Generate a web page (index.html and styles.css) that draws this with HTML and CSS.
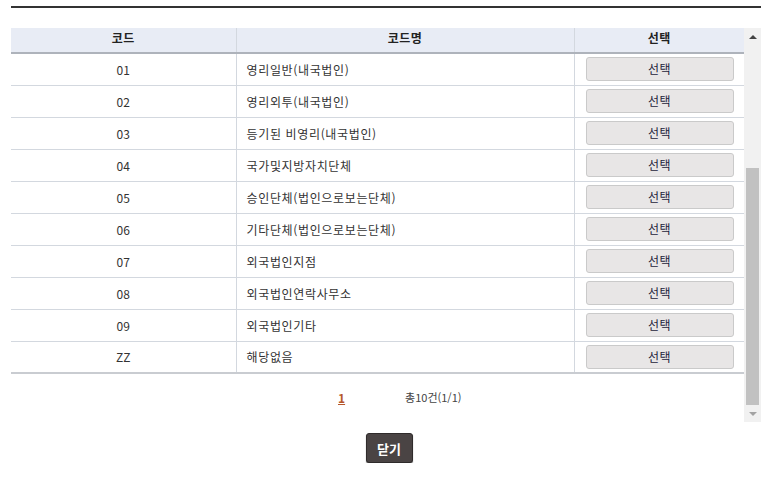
FILE: index.html
```html
<!DOCTYPE html>
<html lang="ko">
<head>
<meta charset="utf-8">
<link rel="stylesheet" href="styles.css">
</head>
<body>
<div class="wrap">
  <div class="scroll-box">
    <div class="content">
      <table class="grid">
        <colgroup><col class="c1"><col class="c2"><col class="c3"></colgroup>
        <thead>
          <tr><th>코드</th><th>코드명</th><th>선택</th></tr>
        </thead>
        <tbody>
          <tr><td class="code">01</td><td class="name">영리일반(내국법인)</td><td class="sel"><button class="btn">선택</button></td></tr>
          <tr><td class="code">02</td><td class="name">영리외투(내국법인)</td><td class="sel"><button class="btn">선택</button></td></tr>
          <tr><td class="code">03</td><td class="name">등기된 비영리(내국법인)</td><td class="sel"><button class="btn">선택</button></td></tr>
          <tr><td class="code">04</td><td class="name">국가및지방자치단체</td><td class="sel"><button class="btn">선택</button></td></tr>
          <tr><td class="code">05</td><td class="name">승인단체(법인으로보는단체)</td><td class="sel"><button class="btn">선택</button></td></tr>
          <tr><td class="code">06</td><td class="name">기타단체(법인으로보는단체)</td><td class="sel"><button class="btn">선택</button></td></tr>
          <tr><td class="code">07</td><td class="name">외국법인지점</td><td class="sel"><button class="btn">선택</button></td></tr>
          <tr><td class="code">08</td><td class="name">외국법인연락사무소</td><td class="sel"><button class="btn">선택</button></td></tr>
          <tr><td class="code">09</td><td class="name">외국법인기타</td><td class="sel"><button class="btn">선택</button></td></tr>
          <tr><td class="code">ZZ</td><td class="name">해당없음</td><td class="sel"><button class="btn">선택</button></td></tr>
        </tbody>
      </table>
      <div class="paging">
        <a class="page-on">1</a>
        <span class="total">총10건(1/1)</span>
      </div>
    </div>
    <div class="vbar">
      <div class="arrow up"></div>
      <div class="track"><div class="thumb"></div></div>
      <div class="arrow down"></div>
    </div>
  </div>
  <div class="btn-area"><button class="close">닫기</button></div>
</div>
</body>
</html>
```
FILE: styles.css
```css
* { box-sizing: border-box; }
html, body { margin: 0; padding: 0; background: #fff; }
body {
  font-family: "Noto Sans CJK KR", "Noto Sans", sans-serif;
  font-size: 12px;
  color: #333;
}
.wrap {
  margin: 6px 0 0 11px;
  width: 750px;
  border-top: 2px solid #333;
  padding-top: 20px;
}
.scroll-box {
  display: flex;
  height: 394px;
}
.content {
  width: 733px;
  flex: none;
}
.grid {
  width: 733px;
  border-collapse: collapse;
  table-layout: fixed;
}
.c1 { width: 225px; }
.c2 { width: 338px; }
.c3 { width: 170px; }
.grid th {
  height: 25px;
  background: #e8ecf5;
  border-bottom: 2px solid #aeb3bb;
  border-left: 1px solid #d3d8df;
  font-size: 12px;
  font-weight: bold;
  color: #222;
  padding: 0;
  line-height: 20px;
  vertical-align: top;
  letter-spacing: 0.5px;
}
.grid th:first-child, .grid td:first-child { border-left: none; }
.grid td {
  height: 32px;
  border-bottom: 1px solid #d3d8df;
  border-left: 1px solid #d3d8df;
  padding: 0;
}
.grid tbody tr:last-child td { border-bottom: 2px solid #c9ccd1; }
.code { text-align: center; }
.name { padding-left: 10px !important; letter-spacing: 0.65px; }
.sel { padding: 0 11px !important; }
.btn {
  display: block;
  width: 148px;
  height: 24px;
  margin: 0 auto;
  border: 1px solid #cacaca;
  border-radius: 3px;
  background: #e8e6e6;
  font-family: inherit;
  font-size: 12px;
  color: #1d1d3a;
  padding: 0;
  line-height: 20px;
  letter-spacing: 0.5px;
}
.paging {
  display: flex;
  align-items: center;
  height: 46px;
  padding-left: 327px;
}
.page-on {
  color: #b5572b;
  font-weight: bold;
  text-decoration: underline;
  font-size: 12px;
}
.total {
  margin-left: 60px;
  font-size: 11px;
  color: #444;
}
.vbar {
  width: 17px;
  flex: none;
  background: #f1f1f1;
  display: flex;
  flex-direction: column;
}
.arrow {
  height: 17px;
  flex: none;
  display: flex;
  align-items: center;
  justify-content: center;
}
.arrow.up::before {
  content: "";
  border-left: 4px solid transparent;
  border-right: 4px solid transparent;
  border-bottom: 4px solid #444;
}
.arrow.down::before {
  content: "";
  border-left: 4px solid transparent;
  border-right: 4px solid transparent;
  border-top: 4px solid #a3a3a3;
}
.track {
  flex: 1;
  display: flex;
  flex-direction: column;
  justify-content: flex-end;
  padding: 0 2px;
}
.thumb {
  height: 237px;
  background: #c1c1c1;
}
.btn-area {
  display: flex;
  justify-content: center;
  padding-top: 11px;
}
.close {
  width: 47px;
  height: 30px;
  background: #4a4444;
  border: 1px solid #2f2b2b;
  border-radius: 3px;
  color: #fff;
  font-family: inherit;
  font-weight: bold;
  font-size: 13px;
  padding: 0;
  box-shadow: 0 1px 1px rgba(0,0,0,0.5);
  margin-left: 6px;
}
```
